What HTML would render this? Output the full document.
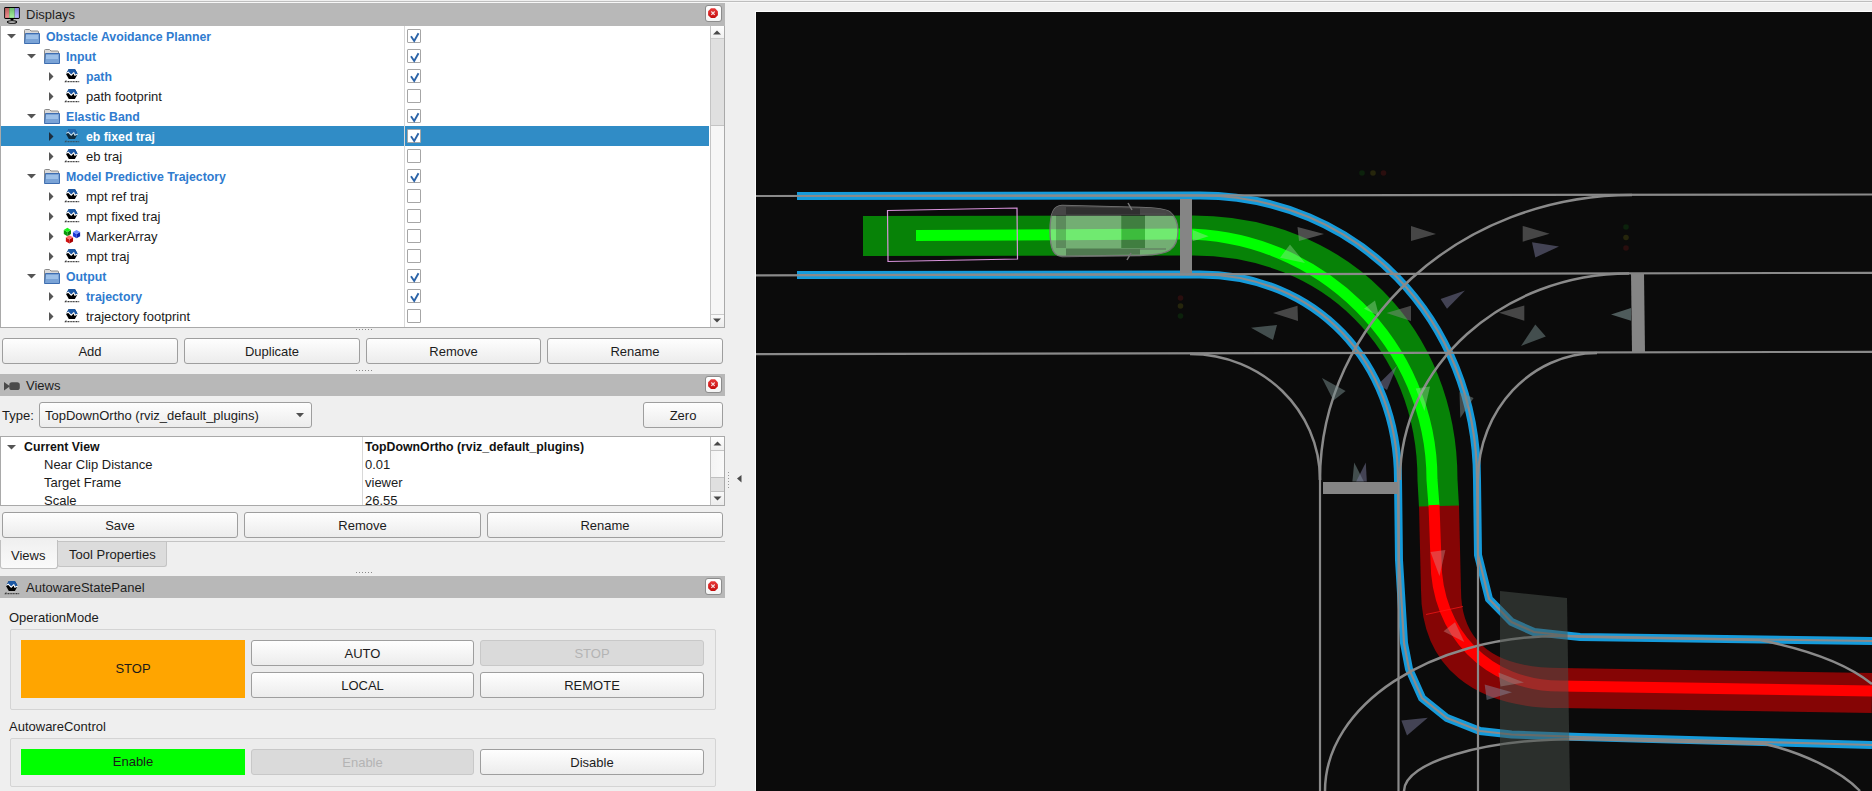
<!DOCTYPE html><html><head><meta charset="utf-8"><style>
*{box-sizing:border-box}
html,body{margin:0;padding:0}
body{width:1872px;height:791px;overflow:hidden;background:#efefef;position:relative;font-family:"Liberation Sans",sans-serif;font-size:13px;color:#1a1a1a}
.a{position:absolute}
.tb{position:absolute;left:0;width:725px;background:#b8b8b8}
.tbt{position:absolute;left:26px;top:4px;font-size:13px;color:#1e1e1e;white-space:nowrap}
.cls{position:absolute;left:705px;width:17px;height:17px;border:1px solid #8c8c8c;border-radius:3px;background:linear-gradient(#fff,#f4f4f4)}
.tree{position:absolute;background:#fff;border:1px solid #a9a9a9}
.t{position:absolute;white-space:nowrap;font-size:13px;color:#1b1b1b}
.b{font-weight:bold;color:#2f7bcf;font-size:12.3px;margin-top:1px}
.cb{position:absolute;left:407px;width:14px;height:14px;background:#fff;border:1px solid #a6a6a6;border-radius:1px}
.btn{position:absolute;height:26px;border:1px solid #9e9e9e;border-radius:3px;background:linear-gradient(#fefefe,#ececec);text-align:center;line-height:25px;font-size:13px;color:#1c1c1c;white-space:nowrap}
.dis{background:#dadada;border-color:#c8c8c8;color:#b4b4b4}
.grp{position:absolute;border:1px solid #d4d4d4;border-radius:2px;background:#ececec}
</style></head><body>
<div class="a" style="left:0;top:1px;width:1872px;height:1px;background:#bdbdbd"></div>
<div class="a" style="left:0;top:2px;width:1872px;height:1px;background:#f7f7f7"></div>
<div class="tb" style="top:3px;height:23px">
<svg class="a" style="left:4px;top:3px" width="16" height="18" viewBox="0 0 16 18">
<defs><linearGradient id="mr" x1="0" y1="0" x2="0" y2="1"><stop offset="0" stop-color="#b85c5c"/><stop offset="1" stop-color="#f09090"/></linearGradient>
<linearGradient id="mg" x1="0" y1="0" x2="0" y2="1"><stop offset="0" stop-color="#6cbc6c"/><stop offset="1" stop-color="#a8f0a0"/></linearGradient>
<linearGradient id="mb" x1="0" y1="0" x2="0" y2="1"><stop offset="0" stop-color="#8080d8"/><stop offset="1" stop-color="#bcbcff"/></linearGradient></defs>
<rect x="0.2" y="1.1" width="15.6" height="11.8" rx="1.3" fill="#000"/>
<rect x="1.1" y="2" width="4.1" height="9.9" fill="url(#mr)"/><rect x="5.2" y="2" width="5.5" height="9.9" fill="url(#mg)"/><rect x="10.7" y="2" width="4.2" height="9.9" fill="url(#mb)"/>
<path d="M6.2,12.8 L9.8,12.8 L9,14.6 L7,14.6 Z" fill="#000"/>
<ellipse cx="8" cy="16" rx="4.6" ry="1.3" fill="#d8d8d8" stroke="#000" stroke-width="1.1"/>
</svg>
<div class="tbt">Displays</div>
<div class="cls" style="top:2px"><svg class="a" style="left:2px;top:2px" width="11" height="11" viewBox="0 0 11 11"><defs><linearGradient id="rg0" x1="0" y1="0" x2="0" y2="1"><stop offset="0" stop-color="#e83a3a"/><stop offset="1" stop-color="#c40c0c"/></linearGradient></defs><polygon points="3,0.3 7,0.3 9.9,3.2 9.9,7.2 7,10.1 3,10.1 0.1,7.2 0.1,3.2" fill="url(#rg0)"/><path d="M3.3,3.5 L6.7,6.9 M6.7,3.5 L3.3,6.9" stroke="#f4dede" stroke-width="1.2"/></svg></div>
</div>
<div class="a" style="left:0;top:26px;width:725px;height:302px;background:#fff;overflow:hidden">
<div class="a" style="left:0;top:0;width:1px;height:302px;background:#a9a9a9"></div>
<div class="a" style="left:0;top:301px;width:725px;height:1px;background:#a9a9a9"></div>
<svg class="a" style="left:7px;top:8px" width="9" height="5"><polygon points="0,0 9,0 4.5,4.5" fill="#555"/></svg>
<svg class="a" style="left:24px;top:3px" width="16" height="15" viewBox="0 0 16 15">
<path d="M0.5,1.5 Q0.5,0.5 1.5,0.5 L5.5,0.5 L7,2 L13.5,2 Q14.5,2 14.5,3 L14.5,13 L0.5,13 Z" fill="#d8d8d8" stroke="#8a8a8a" stroke-width="1"/>
<path d="M1.5,4.5 L15.5,4.5 L15.5,14.5 L0.5,14.5 Z" fill="#7aa3d6" stroke="#3d6db0" stroke-width="1"/>
<rect x="2" y="6" width="12" height="4" fill="#9cc0e8"/>
</svg>
<div class="t b" style="left:46px;top:3px">Obstacle Avoidance Planner</div>
<div class="cb" style="top:3px"><svg class="a" style="left:1px;top:1px" width="12" height="12" viewBox="0 0 12 12"><path d="M2,5.3 L5.2,10 L9.5,2.2" fill="none" stroke="#2a63a8" stroke-width="1.9"/></svg></div>
<svg class="a" style="left:27px;top:28px" width="9" height="5"><polygon points="0,0 9,0 4.5,4.5" fill="#555"/></svg>
<svg class="a" style="left:44px;top:23px" width="16" height="15" viewBox="0 0 16 15">
<path d="M0.5,1.5 Q0.5,0.5 1.5,0.5 L5.5,0.5 L7,2 L13.5,2 Q14.5,2 14.5,3 L14.5,13 L0.5,13 Z" fill="#d8d8d8" stroke="#8a8a8a" stroke-width="1"/>
<path d="M1.5,4.5 L15.5,4.5 L15.5,14.5 L0.5,14.5 Z" fill="#7aa3d6" stroke="#3d6db0" stroke-width="1"/>
<rect x="2" y="6" width="12" height="4" fill="#9cc0e8"/>
</svg>
<div class="t b" style="left:66px;top:23px">Input</div>
<div class="cb" style="top:23px"><svg class="a" style="left:1px;top:1px" width="12" height="12" viewBox="0 0 12 12"><path d="M2,5.3 L5.2,10 L9.5,2.2" fill="none" stroke="#2a63a8" stroke-width="1.9"/></svg></div>
<svg class="a" style="left:49px;top:46px" width="5" height="9"><polygon points="0,0 4.5,4.5 0,9" fill="#555"/></svg>
<svg class="a" style="left:64px;top:40px" width="16" height="18" viewBox="0 0 16 18">
<path d="M4.8,2.9 L10.9,2.9 L13.7,8 L10.9,13.1 L4.8,13.1 L2,8 Z" fill="#000"/>
<path d="M4.8,2.9 L10.9,2.9 L13.7,7.8 L10.9,9 L9.8,6.4 L7.2,9 L4.2,6 L2.1,7.2 Z" fill="#1c58a4"/>
<path d="M2.2,7.4 L4.2,6.2 L7.2,9.2 L9.8,6.6 L10.9,9.2 L13.9,8" fill="none" stroke="#fff" stroke-width="1.1"/>
<path d="M0.8,15.6 L15.4,15.6" stroke="#3a3a3a" stroke-width="1.3" stroke-dasharray="1.1,0.5"/>
<path d="M1.2,16.2 L2.2,14.2" stroke="#3a3a3a" stroke-width="0.8"/>
</svg>
<div class="t b" style="left:86px;top:43px">path</div>
<div class="cb" style="top:43px"><svg class="a" style="left:1px;top:1px" width="12" height="12" viewBox="0 0 12 12"><path d="M2,5.3 L5.2,10 L9.5,2.2" fill="none" stroke="#2a63a8" stroke-width="1.9"/></svg></div>
<svg class="a" style="left:49px;top:66px" width="5" height="9"><polygon points="0,0 4.5,4.5 0,9" fill="#555"/></svg>
<svg class="a" style="left:64px;top:60px" width="16" height="18" viewBox="0 0 16 18">
<path d="M4.8,2.9 L10.9,2.9 L13.7,8 L10.9,13.1 L4.8,13.1 L2,8 Z" fill="#000"/>
<path d="M4.8,2.9 L10.9,2.9 L13.7,7.8 L10.9,9 L9.8,6.4 L7.2,9 L4.2,6 L2.1,7.2 Z" fill="#1c58a4"/>
<path d="M2.2,7.4 L4.2,6.2 L7.2,9.2 L9.8,6.6 L10.9,9.2 L13.9,8" fill="none" stroke="#fff" stroke-width="1.1"/>
<path d="M0.8,15.6 L15.4,15.6" stroke="#3a3a3a" stroke-width="1.3" stroke-dasharray="1.1,0.5"/>
<path d="M1.2,16.2 L2.2,14.2" stroke="#3a3a3a" stroke-width="0.8"/>
</svg>
<div class="t" style="left:86px;top:63px">path footprint</div>
<div class="cb" style="top:63px"></div>
<svg class="a" style="left:27px;top:88px" width="9" height="5"><polygon points="0,0 9,0 4.5,4.5" fill="#555"/></svg>
<svg class="a" style="left:44px;top:83px" width="16" height="15" viewBox="0 0 16 15">
<path d="M0.5,1.5 Q0.5,0.5 1.5,0.5 L5.5,0.5 L7,2 L13.5,2 Q14.5,2 14.5,3 L14.5,13 L0.5,13 Z" fill="#d8d8d8" stroke="#8a8a8a" stroke-width="1"/>
<path d="M1.5,4.5 L15.5,4.5 L15.5,14.5 L0.5,14.5 Z" fill="#7aa3d6" stroke="#3d6db0" stroke-width="1"/>
<rect x="2" y="6" width="12" height="4" fill="#9cc0e8"/>
</svg>
<div class="t b" style="left:66px;top:83px">Elastic Band</div>
<div class="cb" style="top:83px"><svg class="a" style="left:1px;top:1px" width="12" height="12" viewBox="0 0 12 12"><path d="M2,5.3 L5.2,10 L9.5,2.2" fill="none" stroke="#2a63a8" stroke-width="1.9"/></svg></div>
<div class="a" style="left:1px;top:100px;width:708px;height:20px;background:#308cc6"></div>
<svg class="a" style="left:49px;top:106px" width="5" height="9"><polygon points="0,0 4.5,4.5 0,9" fill="#1c2c3c"/></svg>
<svg class="a" style="left:64px;top:100px" width="16" height="18" viewBox="0 0 16 18">
<path d="M4.8,2.9 L10.9,2.9 L13.7,8 L10.9,13.1 L4.8,13.1 L2,8 Z" fill="#000"/>
<path d="M4.8,2.9 L10.9,2.9 L13.7,7.8 L10.9,9 L9.8,6.4 L7.2,9 L4.2,6 L2.1,7.2 Z" fill="#1c58a4"/>
<path d="M2.2,7.4 L4.2,6.2 L7.2,9.2 L9.8,6.6 L10.9,9.2 L13.9,8" fill="none" stroke="#fff" stroke-width="1.1"/>
<path d="M0.8,15.6 L15.4,15.6" stroke="#3a3a3a" stroke-width="1.3" stroke-dasharray="1.1,0.5"/>
<path d="M1.2,16.2 L2.2,14.2" stroke="#3a3a3a" stroke-width="0.8"/>
</svg>
<div class="a" style="left:64px;top:100px;width:16px;height:18px;background:rgba(48,140,198,0.3)"></div>
<div class="t b" style="left:86px;top:103px;color:#fff">eb fixed traj</div>
<div class="cb" style="top:103px"><svg class="a" style="left:1px;top:1px" width="12" height="12" viewBox="0 0 12 12"><path d="M2,5.3 L5.2,10 L9.5,2.2" fill="none" stroke="#2a63a8" stroke-width="1.9"/></svg></div>
<svg class="a" style="left:49px;top:126px" width="5" height="9"><polygon points="0,0 4.5,4.5 0,9" fill="#555"/></svg>
<svg class="a" style="left:64px;top:120px" width="16" height="18" viewBox="0 0 16 18">
<path d="M4.8,2.9 L10.9,2.9 L13.7,8 L10.9,13.1 L4.8,13.1 L2,8 Z" fill="#000"/>
<path d="M4.8,2.9 L10.9,2.9 L13.7,7.8 L10.9,9 L9.8,6.4 L7.2,9 L4.2,6 L2.1,7.2 Z" fill="#1c58a4"/>
<path d="M2.2,7.4 L4.2,6.2 L7.2,9.2 L9.8,6.6 L10.9,9.2 L13.9,8" fill="none" stroke="#fff" stroke-width="1.1"/>
<path d="M0.8,15.6 L15.4,15.6" stroke="#3a3a3a" stroke-width="1.3" stroke-dasharray="1.1,0.5"/>
<path d="M1.2,16.2 L2.2,14.2" stroke="#3a3a3a" stroke-width="0.8"/>
</svg>
<div class="t" style="left:86px;top:123px">eb traj</div>
<div class="cb" style="top:123px"></div>
<svg class="a" style="left:27px;top:148px" width="9" height="5"><polygon points="0,0 9,0 4.5,4.5" fill="#555"/></svg>
<svg class="a" style="left:44px;top:143px" width="16" height="15" viewBox="0 0 16 15">
<path d="M0.5,1.5 Q0.5,0.5 1.5,0.5 L5.5,0.5 L7,2 L13.5,2 Q14.5,2 14.5,3 L14.5,13 L0.5,13 Z" fill="#d8d8d8" stroke="#8a8a8a" stroke-width="1"/>
<path d="M1.5,4.5 L15.5,4.5 L15.5,14.5 L0.5,14.5 Z" fill="#7aa3d6" stroke="#3d6db0" stroke-width="1"/>
<rect x="2" y="6" width="12" height="4" fill="#9cc0e8"/>
</svg>
<div class="t b" style="left:66px;top:143px">Model Predictive Trajectory</div>
<div class="cb" style="top:143px"><svg class="a" style="left:1px;top:1px" width="12" height="12" viewBox="0 0 12 12"><path d="M2,5.3 L5.2,10 L9.5,2.2" fill="none" stroke="#2a63a8" stroke-width="1.9"/></svg></div>
<svg class="a" style="left:49px;top:166px" width="5" height="9"><polygon points="0,0 4.5,4.5 0,9" fill="#555"/></svg>
<svg class="a" style="left:64px;top:160px" width="16" height="18" viewBox="0 0 16 18">
<path d="M4.8,2.9 L10.9,2.9 L13.7,8 L10.9,13.1 L4.8,13.1 L2,8 Z" fill="#000"/>
<path d="M4.8,2.9 L10.9,2.9 L13.7,7.8 L10.9,9 L9.8,6.4 L7.2,9 L4.2,6 L2.1,7.2 Z" fill="#1c58a4"/>
<path d="M2.2,7.4 L4.2,6.2 L7.2,9.2 L9.8,6.6 L10.9,9.2 L13.9,8" fill="none" stroke="#fff" stroke-width="1.1"/>
<path d="M0.8,15.6 L15.4,15.6" stroke="#3a3a3a" stroke-width="1.3" stroke-dasharray="1.1,0.5"/>
<path d="M1.2,16.2 L2.2,14.2" stroke="#3a3a3a" stroke-width="0.8"/>
</svg>
<div class="t" style="left:86px;top:163px">mpt ref traj</div>
<div class="cb" style="top:163px"></div>
<svg class="a" style="left:49px;top:186px" width="5" height="9"><polygon points="0,0 4.5,4.5 0,9" fill="#555"/></svg>
<svg class="a" style="left:64px;top:180px" width="16" height="18" viewBox="0 0 16 18">
<path d="M4.8,2.9 L10.9,2.9 L13.7,8 L10.9,13.1 L4.8,13.1 L2,8 Z" fill="#000"/>
<path d="M4.8,2.9 L10.9,2.9 L13.7,7.8 L10.9,9 L9.8,6.4 L7.2,9 L4.2,6 L2.1,7.2 Z" fill="#1c58a4"/>
<path d="M2.2,7.4 L4.2,6.2 L7.2,9.2 L9.8,6.6 L10.9,9.2 L13.9,8" fill="none" stroke="#fff" stroke-width="1.1"/>
<path d="M0.8,15.6 L15.4,15.6" stroke="#3a3a3a" stroke-width="1.3" stroke-dasharray="1.1,0.5"/>
<path d="M1.2,16.2 L2.2,14.2" stroke="#3a3a3a" stroke-width="0.8"/>
</svg>
<div class="t" style="left:86px;top:183px">mpt fixed traj</div>
<div class="cb" style="top:183px"></div>
<svg class="a" style="left:49px;top:206px" width="5" height="9"><polygon points="0,0 4.5,4.5 0,9" fill="#555"/></svg>
<svg class="a" style="left:63px;top:201px" width="19" height="19" viewBox="-1 -1 19 19"><polygon points="3.4,4.0 -0.20000000000000018,1.9000000000000001 -0.20000000000000018,6.100000000000001 3.4,8.200000000000001" fill="#0a9a0a"/><polygon points="3.4,4.0 7.0,1.9000000000000001 7.0,6.100000000000001 3.4,8.200000000000001" fill="#077a07"/><polygon points="3.4,-0.2 7.0,1.9000000000000001 3.4,4.0 -0.20000000000000018,1.9000000000000001" fill="#19f519"/><polygon points="12.55,6.1 8.950000000000001,4.0 8.950000000000001,8.200000000000001 12.55,10.3" fill="#1a3ad6"/><polygon points="12.55,6.1 16.150000000000002,4.0 16.150000000000002,8.200000000000001 12.55,10.3" fill="#0a22b0"/><polygon points="12.55,1.9 16.150000000000002,4.0 12.55,6.1 8.950000000000001,4.0" fill="#6f8cff"/><polygon points="5.45,11.4 1.85,9.3 1.85,13.500000000000002 5.45,15.600000000000001" fill="#d01010"/><polygon points="5.45,11.4 9.05,9.3 9.05,13.500000000000002 5.45,15.600000000000001" fill="#a80000"/><polygon points="5.45,7.2 9.05,9.3 5.45,11.4 1.85,9.3" fill="#ff6a6a"/></svg>
<div class="t" style="left:86px;top:203px">MarkerArray</div>
<div class="cb" style="top:203px"></div>
<svg class="a" style="left:49px;top:226px" width="5" height="9"><polygon points="0,0 4.5,4.5 0,9" fill="#555"/></svg>
<svg class="a" style="left:64px;top:220px" width="16" height="18" viewBox="0 0 16 18">
<path d="M4.8,2.9 L10.9,2.9 L13.7,8 L10.9,13.1 L4.8,13.1 L2,8 Z" fill="#000"/>
<path d="M4.8,2.9 L10.9,2.9 L13.7,7.8 L10.9,9 L9.8,6.4 L7.2,9 L4.2,6 L2.1,7.2 Z" fill="#1c58a4"/>
<path d="M2.2,7.4 L4.2,6.2 L7.2,9.2 L9.8,6.6 L10.9,9.2 L13.9,8" fill="none" stroke="#fff" stroke-width="1.1"/>
<path d="M0.8,15.6 L15.4,15.6" stroke="#3a3a3a" stroke-width="1.3" stroke-dasharray="1.1,0.5"/>
<path d="M1.2,16.2 L2.2,14.2" stroke="#3a3a3a" stroke-width="0.8"/>
</svg>
<div class="t" style="left:86px;top:223px">mpt traj</div>
<div class="cb" style="top:223px"></div>
<svg class="a" style="left:27px;top:248px" width="9" height="5"><polygon points="0,0 9,0 4.5,4.5" fill="#555"/></svg>
<svg class="a" style="left:44px;top:243px" width="16" height="15" viewBox="0 0 16 15">
<path d="M0.5,1.5 Q0.5,0.5 1.5,0.5 L5.5,0.5 L7,2 L13.5,2 Q14.5,2 14.5,3 L14.5,13 L0.5,13 Z" fill="#d8d8d8" stroke="#8a8a8a" stroke-width="1"/>
<path d="M1.5,4.5 L15.5,4.5 L15.5,14.5 L0.5,14.5 Z" fill="#7aa3d6" stroke="#3d6db0" stroke-width="1"/>
<rect x="2" y="6" width="12" height="4" fill="#9cc0e8"/>
</svg>
<div class="t b" style="left:66px;top:243px">Output</div>
<div class="cb" style="top:243px"><svg class="a" style="left:1px;top:1px" width="12" height="12" viewBox="0 0 12 12"><path d="M2,5.3 L5.2,10 L9.5,2.2" fill="none" stroke="#2a63a8" stroke-width="1.9"/></svg></div>
<svg class="a" style="left:49px;top:266px" width="5" height="9"><polygon points="0,0 4.5,4.5 0,9" fill="#555"/></svg>
<svg class="a" style="left:64px;top:260px" width="16" height="18" viewBox="0 0 16 18">
<path d="M4.8,2.9 L10.9,2.9 L13.7,8 L10.9,13.1 L4.8,13.1 L2,8 Z" fill="#000"/>
<path d="M4.8,2.9 L10.9,2.9 L13.7,7.8 L10.9,9 L9.8,6.4 L7.2,9 L4.2,6 L2.1,7.2 Z" fill="#1c58a4"/>
<path d="M2.2,7.4 L4.2,6.2 L7.2,9.2 L9.8,6.6 L10.9,9.2 L13.9,8" fill="none" stroke="#fff" stroke-width="1.1"/>
<path d="M0.8,15.6 L15.4,15.6" stroke="#3a3a3a" stroke-width="1.3" stroke-dasharray="1.1,0.5"/>
<path d="M1.2,16.2 L2.2,14.2" stroke="#3a3a3a" stroke-width="0.8"/>
</svg>
<div class="t b" style="left:86px;top:263px">trajectory</div>
<div class="cb" style="top:263px"><svg class="a" style="left:1px;top:1px" width="12" height="12" viewBox="0 0 12 12"><path d="M2,5.3 L5.2,10 L9.5,2.2" fill="none" stroke="#2a63a8" stroke-width="1.9"/></svg></div>
<svg class="a" style="left:49px;top:286px" width="5" height="9"><polygon points="0,0 4.5,4.5 0,9" fill="#555"/></svg>
<svg class="a" style="left:64px;top:280px" width="16" height="18" viewBox="0 0 16 18">
<path d="M4.8,2.9 L10.9,2.9 L13.7,8 L10.9,13.1 L4.8,13.1 L2,8 Z" fill="#000"/>
<path d="M4.8,2.9 L10.9,2.9 L13.7,7.8 L10.9,9 L9.8,6.4 L7.2,9 L4.2,6 L2.1,7.2 Z" fill="#1c58a4"/>
<path d="M2.2,7.4 L4.2,6.2 L7.2,9.2 L9.8,6.6 L10.9,9.2 L13.9,8" fill="none" stroke="#fff" stroke-width="1.1"/>
<path d="M0.8,15.6 L15.4,15.6" stroke="#3a3a3a" stroke-width="1.3" stroke-dasharray="1.1,0.5"/>
<path d="M1.2,16.2 L2.2,14.2" stroke="#3a3a3a" stroke-width="0.8"/>
</svg>
<div class="t" style="left:86px;top:283px">trajectory footprint</div>
<div class="cb" style="top:283px"></div>
<div class="a" style="left:404px;top:0;width:1px;height:301px;background:#d8d8d8"></div>
<div class="a" style="left:710px;top:0;width:15px;height:301px;background:#f6f6f6;border-left:1px solid #c4c4c4;border-right:1px solid #a9a9a9"></div>
<div class="a" style="left:711px;top:0;width:13px;height:13px;background:linear-gradient(#fff,#f0f0f0);border-bottom:1px solid #cccccc"></div>
<svg class="a" style="left:713px;top:4px" width="8" height="5"><polygon points="0,4.5 4,0.5 8,4.5" fill="#484848"/></svg>
<div class="a" style="left:711px;top:13px;width:13px;height:87px;background:#e0e0e0;border-bottom:1px solid #c4c4c4"></div>
<div class="a" style="left:711px;top:288px;width:13px;height:13px;background:linear-gradient(#fafafa,#ececec);border-top:1px solid #cccccc"></div>
<svg class="a" style="left:713px;top:292px" width="8" height="5"><polygon points="0,0.5 8,0.5 4,4.5" fill="#484848"/></svg>
</div>
<div class="btn" style="left:2px;top:338px;width:176px">Add</div>
<div class="btn" style="left:184px;top:338px;width:176px">Duplicate</div>
<div class="btn" style="left:366px;top:338px;width:175px">Remove</div>
<div class="btn" style="left:547px;top:338px;width:176px">Rename</div>
<div class="tb" style="top:374px;height:22px">
<svg class="a" style="left:4px;top:8px" width="17" height="9" viewBox="0 0 17 9"><polygon points="0,0 6,4.2 0,8.4" fill="#4a4a4a"/><rect x="5.3" y="0.3" width="10.5" height="7.8" rx="2.6" fill="#4a4a4a"/></svg>
<div class="tbt" style="top:4px">Views</div>
<div class="cls" style="top:2px"><svg class="a" style="left:2px;top:2px" width="11" height="11" viewBox="0 0 11 11"><defs><linearGradient id="rg1" x1="0" y1="0" x2="0" y2="1"><stop offset="0" stop-color="#e83a3a"/><stop offset="1" stop-color="#c40c0c"/></linearGradient></defs><polygon points="3,0.3 7,0.3 9.9,3.2 9.9,7.2 7,10.1 3,10.1 0.1,7.2 0.1,3.2" fill="url(#rg1)"/><path d="M3.3,3.5 L6.7,6.9 M6.7,3.5 L3.3,6.9" stroke="#f4dede" stroke-width="1.2"/></svg></div>
</div>
<div class="t" style="left:2px;top:408px">Type:</div>
<div class="btn" style="left:39px;top:402px;width:273px;text-align:left;padding-left:5px">TopDownOrtho (rviz_default_plugins)</div>
<svg class="a" style="left:296px;top:413px" width="8" height="5"><polygon points="0,0 8,0 4,4.3" fill="#505050"/></svg>
<div class="btn" style="left:643px;top:402px;width:80px">Zero</div>
<div class="a" style="left:0;top:436px;width:725px;height:70px;background:#fff;border:1px solid #a9a9a9;overflow:hidden">
<svg class="a" style="left:6px;top:8px" width="9" height="5"><polygon points="0,0 9,0 4.5,4.5" fill="#555"/></svg>
<div class="t" style="left:23px;top:3px;font-weight:bold;font-size:12.3px;color:#111">Current View</div>
<div class="t" style="left:43px;top:20px">Near Clip Distance</div>
<div class="t" style="left:43px;top:38px">Target Frame</div>
<div class="t" style="left:43px;top:56px">Scale</div>
<div class="a" style="left:361px;top:0;width:1px;height:70px;background:#d8d8d8"></div>
<div class="t" style="left:364px;top:3px;font-weight:bold;font-size:12.3px;color:#111">TopDownOrtho (rviz_default_plugins)</div>
<div class="t" style="left:364px;top:20px">0.01</div>
<div class="t" style="left:364px;top:38px">viewer</div>
<div class="t" style="left:364px;top:56px">26.55</div>
<div class="a" style="left:709px;top:0;width:15px;height:68px;background:linear-gradient(90deg,#f4f4f4,#fafafa);border-left:1px solid #c0c0c0"></div>
<div class="a" style="left:710px;top:0;width:14px;height:14px;background:linear-gradient(#fff,#f0f0f0);border-bottom:1px solid #c4c4c4"></div>
<svg class="a" style="left:712px;top:4px" width="9" height="5"><polygon points="0.5,4.5 4.5,0.5 8.5,4.5" fill="#484848"/></svg>
<div class="a" style="left:710px;top:40px;width:14px;height:14px;background:#e0e0e0;border-top:1px solid #c0c0c0"></div>
<div class="a" style="left:710px;top:54px;width:14px;height:14px;background:linear-gradient(#fafafa,#ececec);border-top:1px solid #c0c0c0"></div>
<svg class="a" style="left:712px;top:59px" width="9" height="5"><polygon points="0.5,0.5 8.5,0.5 4.5,4.5" fill="#484848"/></svg>
</div>
<div class="btn" style="left:2px;top:512px;width:236px">Save</div>
<div class="btn" style="left:244px;top:512px;width:237px">Remove</div>
<div class="btn" style="left:487px;top:512px;width:236px">Rename</div>
<div class="a" style="left:0;top:541px;width:725px;height:1px;background:#c4c4c4"></div>
<div class="a" style="left:57px;top:542px;width:110px;height:25px;background:#dcdcdc;border:1px solid #c4c4c4;border-top:none;border-radius:0 0 3px 3px"></div>
<div class="a" style="left:0;top:540px;width:58px;height:29px;background:linear-gradient(#f0f0f0,#fafafa);border:1px solid #c0c0c0;border-top:none;border-radius:0 0 3px 3px"></div>
<div class="t" style="left:11px;top:548px">Views</div>
<div class="t" style="left:69px;top:547px">Tool Properties</div>
<div class="tb" style="top:576px;height:22px">
<svg class="a" style="left:4px;top:2px" width="16" height="18" viewBox="0 0 16 18">
<path d="M4.8,2.9 L10.9,2.9 L13.7,8 L10.9,13.1 L4.8,13.1 L2,8 Z" fill="#000"/>
<path d="M4.8,2.9 L10.9,2.9 L13.7,7.8 L10.9,9 L9.8,6.4 L7.2,9 L4.2,6 L2.1,7.2 Z" fill="#1c58a4"/>
<path d="M2.2,7.4 L4.2,6.2 L7.2,9.2 L9.8,6.6 L10.9,9.2 L13.9,8" fill="none" stroke="#fff" stroke-width="1.1"/>
<path d="M0.8,15.6 L15.4,15.6" stroke="#3a3a3a" stroke-width="1.3" stroke-dasharray="1.1,0.5"/>
<path d="M1.2,16.2 L2.2,14.2" stroke="#3a3a3a" stroke-width="0.8"/>
</svg>
<div class="tbt" style="top:4px">AutowareStatePanel</div>
<div class="cls" style="top:2px"><svg class="a" style="left:2px;top:2px" width="11" height="11" viewBox="0 0 11 11"><defs><linearGradient id="rg2" x1="0" y1="0" x2="0" y2="1"><stop offset="0" stop-color="#e83a3a"/><stop offset="1" stop-color="#c40c0c"/></linearGradient></defs><polygon points="3,0.3 7,0.3 9.9,3.2 9.9,7.2 7,10.1 3,10.1 0.1,7.2 0.1,3.2" fill="url(#rg2)"/><path d="M3.3,3.5 L6.7,6.9 M6.7,3.5 L3.3,6.9" stroke="#f4dede" stroke-width="1.2"/></svg></div>
</div>
<div class="t" style="left:9px;top:610px">OperationMode</div>
<div class="grp" style="left:10px;top:629px;width:706px;height:81px"></div>
<div class="a" style="left:21px;top:640px;width:224px;height:58px;background:#ffa500;text-align:center;line-height:58px;color:#1a1a1a">STOP</div>
<div class="btn" style="left:251px;top:640px;width:223px">AUTO</div>
<div class="btn" style="left:251px;top:672px;width:223px">LOCAL</div>
<div class="btn dis" style="left:480px;top:640px;width:224px">STOP</div>
<div class="btn" style="left:480px;top:672px;width:224px">REMOTE</div>
<div class="t" style="left:9px;top:719px">AutowareControl</div>
<div class="grp" style="left:10px;top:738px;width:706px;height:49px"></div>
<div class="a" style="left:21px;top:749px;width:224px;height:26px;background:#00ff00;text-align:center;line-height:26px;color:#1a1a1a">Enable</div>
<div class="btn dis" style="left:251px;top:749px;width:223px">Enable</div>
<div class="btn" style="left:480px;top:749px;width:224px">Disable</div>
<div class="a" style="left:356px;top:329px;width:1px;height:1px;background:#8a8a8a"></div>
<div class="a" style="left:359px;top:329px;width:1px;height:1px;background:#8a8a8a"></div>
<div class="a" style="left:362px;top:329px;width:1px;height:1px;background:#8a8a8a"></div>
<div class="a" style="left:365px;top:329px;width:1px;height:1px;background:#8a8a8a"></div>
<div class="a" style="left:368px;top:329px;width:1px;height:1px;background:#8a8a8a"></div>
<div class="a" style="left:371px;top:329px;width:1px;height:1px;background:#8a8a8a"></div>
<div class="a" style="left:356px;top:370px;width:1px;height:1px;background:#8a8a8a"></div>
<div class="a" style="left:359px;top:370px;width:1px;height:1px;background:#8a8a8a"></div>
<div class="a" style="left:362px;top:370px;width:1px;height:1px;background:#8a8a8a"></div>
<div class="a" style="left:365px;top:370px;width:1px;height:1px;background:#8a8a8a"></div>
<div class="a" style="left:368px;top:370px;width:1px;height:1px;background:#8a8a8a"></div>
<div class="a" style="left:371px;top:370px;width:1px;height:1px;background:#8a8a8a"></div>
<div class="a" style="left:356px;top:572px;width:1px;height:1px;background:#8a8a8a"></div>
<div class="a" style="left:359px;top:572px;width:1px;height:1px;background:#8a8a8a"></div>
<div class="a" style="left:362px;top:572px;width:1px;height:1px;background:#8a8a8a"></div>
<div class="a" style="left:365px;top:572px;width:1px;height:1px;background:#8a8a8a"></div>
<div class="a" style="left:368px;top:572px;width:1px;height:1px;background:#8a8a8a"></div>
<div class="a" style="left:371px;top:572px;width:1px;height:1px;background:#8a8a8a"></div>
<svg class="a" style="left:737px;top:475px" width="5" height="8"><polygon points="4.5,0 0,3.5 4.5,7.5" fill="#4a4a4a"/></svg>
<div class="a" style="left:728px;top:472px;width:1px;height:1px;background:#9a9a9a"></div>
<div class="a" style="left:728px;top:475px;width:1px;height:1px;background:#9a9a9a"></div>
<div class="a" style="left:728px;top:478px;width:1px;height:1px;background:#9a9a9a"></div>
<div class="a" style="left:728px;top:481px;width:1px;height:1px;background:#9a9a9a"></div>
<div class="a" style="left:728px;top:484px;width:1px;height:1px;background:#9a9a9a"></div>
<div class="a" style="left:728px;top:487px;width:1px;height:1px;background:#9a9a9a"></div>
<div class="a" style="left:755px;top:11px;width:1117px;height:780px;background:#fdfdfd"></div>
<svg class="a" style="left:756px;top:12px" width="1116" height="779" viewBox="756 12 1116 779">
<rect x="756" y="12" width="1116" height="779" fill="#0b0b0b"/>
<path d="M863,236 L1193,235.5 C1334.8,235.5 1437.5,338.2 1437.5,480 L1439,507" fill="none" stroke="#078207" stroke-width="40"/>
<path d="M1439,506 L1441,590 C1441,653.7 1482.7,688 1560,688 L1872,693" fill="none" stroke="#850505" stroke-width="40"/>
<path d="M916,235.5 L1183,234 C1320.0,234 1432,344.7 1432,480 L1434,506" fill="none" stroke="#00ff00" stroke-width="11"/>
<path d="M1434,505 L1436,560 C1436,633.1 1488.1,686 1560,686 L1872,691" fill="none" stroke="#ff0000" stroke-width="11"/>
<path d="M1426,614.5 L1463,606.5" stroke="#ff1a1a" stroke-width="1" opacity="0.7"/>
<path d="M797,196 L1200,195.5 C1356.5,195.5 1477,319.3 1477,480 L1478,555 L1489,599 L1511.5,622 L1534,632 L1580,637 L1872,641" fill="none" stroke="#159bdb" stroke-width="8"/>
<path d="M797,275 L1200,274.5 C1314.8,274.5 1398,360.8 1398,480 L1399,560 L1404,643 L1409,669 L1422,698 L1447,718 L1480,731 L1511.5,734.5 L1580,737 L1872,745" fill="none" stroke="#159bdb" stroke-width="8"/>
<path d="M797,196 L1200,195.5 C1356.5,195.5 1477,319.3 1477,480 L1478,555 L1489,599 L1511.5,622 L1534,632 L1580,637 L1872,641" fill="none" stroke="#8a8a8a" stroke-width="2.2"/>
<path d="M797,275 L1200,274.5 C1314.8,274.5 1398,360.8 1398,480 L1399,560 L1404,643 L1409,669 L1422,698 L1447,718 L1480,731 L1511.5,734.5 L1580,737 L1872,745" fill="none" stroke="#8a8a8a" stroke-width="2.2"/>
<path d="M756,196 L1872,194.5" fill="none" stroke="#8a8a8a" stroke-width="2.2"/>
<path d="M756,275.3 L1872,272.8" fill="none" stroke="#8a8a8a" stroke-width="2.2"/>
<path d="M756,354.2 L1872,351.8" fill="none" stroke="#8a8a8a" stroke-width="2.2"/>
<path d="M1320,480 L1320,791" fill="none" stroke="#8a8a8a" stroke-width="2.2"/>
<path d="M1398.5,480 L1398.5,791" fill="none" stroke="#8a8a8a" stroke-width="2.2"/>
<path d="M1478,480 L1478,791" fill="none" stroke="#8a8a8a" stroke-width="2.2"/>
<path d="M1190,354 C1262,354 1320,410 1320,480" fill="none" stroke="#8a8a8a" stroke-width="2.5"/>
<path d="M1632,195 C1459.7,195 1320,322.6 1320,480" fill="none" stroke="#8a8a8a" stroke-width="2.5"/>
<path d="M1629,273.5 C1502.5,273.5 1400,366.0 1400,480" fill="none" stroke="#8a8a8a" stroke-width="2.5"/>
<path d="M1597,353 C1531.3,353 1478,409.9 1478,480" fill="none" stroke="#8a8a8a" stroke-width="2.5"/>
<path d="M1325,791 C1325,705.4 1430.2,636 1560,636 L1760,640 C1800,648 1845,662 1872,684" fill="none" stroke="#8a8a8a" stroke-width="2.5"/>
<path d="M1404,791 C1404,762.3 1482.8,739 1580,739 L1765,744 C1800,752 1840,770 1860,791" fill="none" stroke="#8a8a8a" stroke-width="2.5"/>
<polygon points="1180,199 1192,199 1192,273 1180,273" fill="#858585"/>
<polygon points="1631,273 1644,273 1645,353 1632,353" fill="#858585"/>
<polygon points="1323,482 1398,482 1398,494 1323,494" fill="#858585"/>
<polygon points="887.5,210.5 1017,208 1017.5,259 888,261.5" fill="none" stroke="#d993dc" stroke-width="1.2"/>
<g>
<path fill-rule="evenodd" d="M1062,205.5 L1140,207.5 C1155,208 1166,209 1170,212 C1176,217 1178,224 1178,231 C1178,238 1176,246 1170,250 C1166,253 1155,255 1140,255.5 L1062,256.5 C1054,256 1050,250 1050,231 C1050,212 1054,206 1062,205.5 Z M1121.5,215 L1145,215 L1145,248 L1121.5,248 Z" fill="#d6d6d6" fill-opacity="0.52"/>
<rect x="1121.5" y="215" width="23.5" height="33" fill="#7a7a7a" fill-opacity="0.5"/>
<path d="M1062,205.5 L1140,207.5 C1155,208 1166,209 1170,212 C1176,217 1178,224 1178,231 C1178,238 1176,246 1170,250 C1166,253 1155,255 1140,255.5 L1062,256.5 C1054,256 1050,250 1050,231 C1050,212 1054,206 1062,205.5 Z" fill="none" stroke="#777" stroke-width="1.3"/>
<clipPath id="carclip"><path d="M1062,205.5 L1140,207.5 C1155,208 1166,209 1170,212 C1176,217 1178,224 1178,231 C1178,238 1176,246 1170,250 C1166,253 1155,255 1140,255.5 L1062,256.5 C1054,256 1050,250 1050,231 C1050,212 1054,206 1062,205.5 Z"/></clipPath>
<g clip-path="url(#carclip)"><rect x="1049" y="203" width="130" height="13" fill="#000" fill-opacity="0.4"/><rect x="1049" y="256" width="130" height="4" fill="#000" fill-opacity="0.4"/></g>
<path d="M1066,207 L1140,208.5 L1140,214.5 L1066,214.5 Z M1066,248.5 L1140,248.5 L1140,254.5 L1066,255.5 Z" fill="#000" fill-opacity="0.3"/>
<path d="M1056,215 L1066,215 L1066,248 L1056,248 Z" fill="#000" fill-opacity="0.2"/>
<path d="M1140,214 L1166,214 M1140,249 L1166,249" stroke="#555" stroke-width="1" opacity="0.7"/>
<path d="M1128,203 L1132,210 M1127,260 L1131,253" stroke="#777" stroke-width="1.5"/>
</g>
<polygon points="1500,591 1567,598 1570,791 1500,791" fill="#474f49" fill-opacity="0.53"/>
<polygon points="1297.5,227 1324,234 1299,241" fill="#9a9a9a" fill-opacity="0.47"/>
<polygon points="1280,257.7 1290,244.4 1305,263" fill="#9ad69a" fill-opacity="0.42"/>
<polygon points="1411,226 1436,234 1411,241" fill="#8a8a8a" fill-opacity="0.47"/>
<polygon points="1273,313 1297.5,305.7 1298,321" fill="#8a8a8a" fill-opacity="0.47"/>
<polygon points="1251,327.8 1277,325 1273,340" fill="#7a9090" fill-opacity="0.51"/>
<polygon points="1364,308.8 1375,300.5 1379,316" fill="#9ad69a" fill-opacity="0.42"/>
<polygon points="1386.4,313 1411,305.7 1411,321" fill="#8a8a8a" fill-opacity="0.47"/>
<polygon points="1440.6,299 1465,290.6 1447,308.8" fill="#7a7a9a" fill-opacity="0.51"/>
<polygon points="1322,378 1345.6,391 1333.5,400.5" fill="#7a9090" fill-opacity="0.51"/>
<polygon points="1378,384.6 1397,365.7 1387,390" fill="#7a7a9a" fill-opacity="0.51"/>
<polygon points="1415.7,388.5 1430,386.4 1424.4,411" fill="#9ad69a" fill-opacity="0.42"/>
<polygon points="1459.5,392 1473.6,398 1460.3,418" fill="#7a8a8a" fill-opacity="0.51"/>
<polygon points="1352.4,481.4 1354.2,462.4 1363.8,481.4" fill="#7a9090" fill-opacity="0.51"/>
<polygon points="1356.2,481.4 1365.8,462.4 1366.8,481.4" fill="#7a7a9a" fill-opacity="0.51"/>
<polygon points="1430.5,552 1445.4,550 1439.5,576.3" fill="#c89090" fill-opacity="0.42"/>
<polygon points="1443.5,631.3 1455,622.3 1464.3,642" fill="#c89090" fill-opacity="0.42"/>
<polygon points="1498.5,672.6 1524,682.4 1500.5,686.4" fill="#9a8a8a" fill-opacity="0.47"/>
<polygon points="1484.7,684.4 1512,692.3 1486.7,700" fill="#8a8aa0" fill-opacity="0.47"/>
<polygon points="1401.4,720.6 1427.8,717.8 1407,735.5" fill="#7a7a9a" fill-opacity="0.51"/>
<polygon points="1522.7,225.9 1549.6,233.8 1522.7,241.7" fill="#8a8a8a" fill-opacity="0.47"/>
<polygon points="1532,242.3 1559,246.4 1535.3,257.5" fill="#7a7a9a" fill-opacity="0.51"/>
<polygon points="1499,312.8 1524.3,305.5 1524.3,320.7" fill="#8a8a8a" fill-opacity="0.47"/>
<polygon points="1521,346 1535.3,324.5 1545.8,336.5" fill="#7a9090" fill-opacity="0.51"/>
<polygon points="1611,314.4 1631,308 1631,320.7" fill="#90a8a8" fill-opacity="0.51"/>
<polygon points="1192.6,230 1208.6,236.3 1192.6,241.2" fill="#b0d8b0" fill-opacity="0.42"/>
<circle cx="1180.5" cy="298" r="2.8" fill="#2a0e0e"/>
<circle cx="1180.5" cy="306" r="2.8" fill="#26260c"/>
<circle cx="1180.5" cy="316" r="2.8" fill="#0c220c"/>
<circle cx="1362" cy="173" r="2.8" fill="#0c220c"/>
<circle cx="1373" cy="173" r="2.8" fill="#26260c"/>
<circle cx="1383.5" cy="173" r="2.8" fill="#2a0e0e"/>
<circle cx="1626" cy="227" r="2.8" fill="#0c220c"/>
<circle cx="1626" cy="237.5" r="2.8" fill="#26260c"/>
<circle cx="1626" cy="248" r="2.8" fill="#2a0e0e"/>
</svg>
</body></html>
